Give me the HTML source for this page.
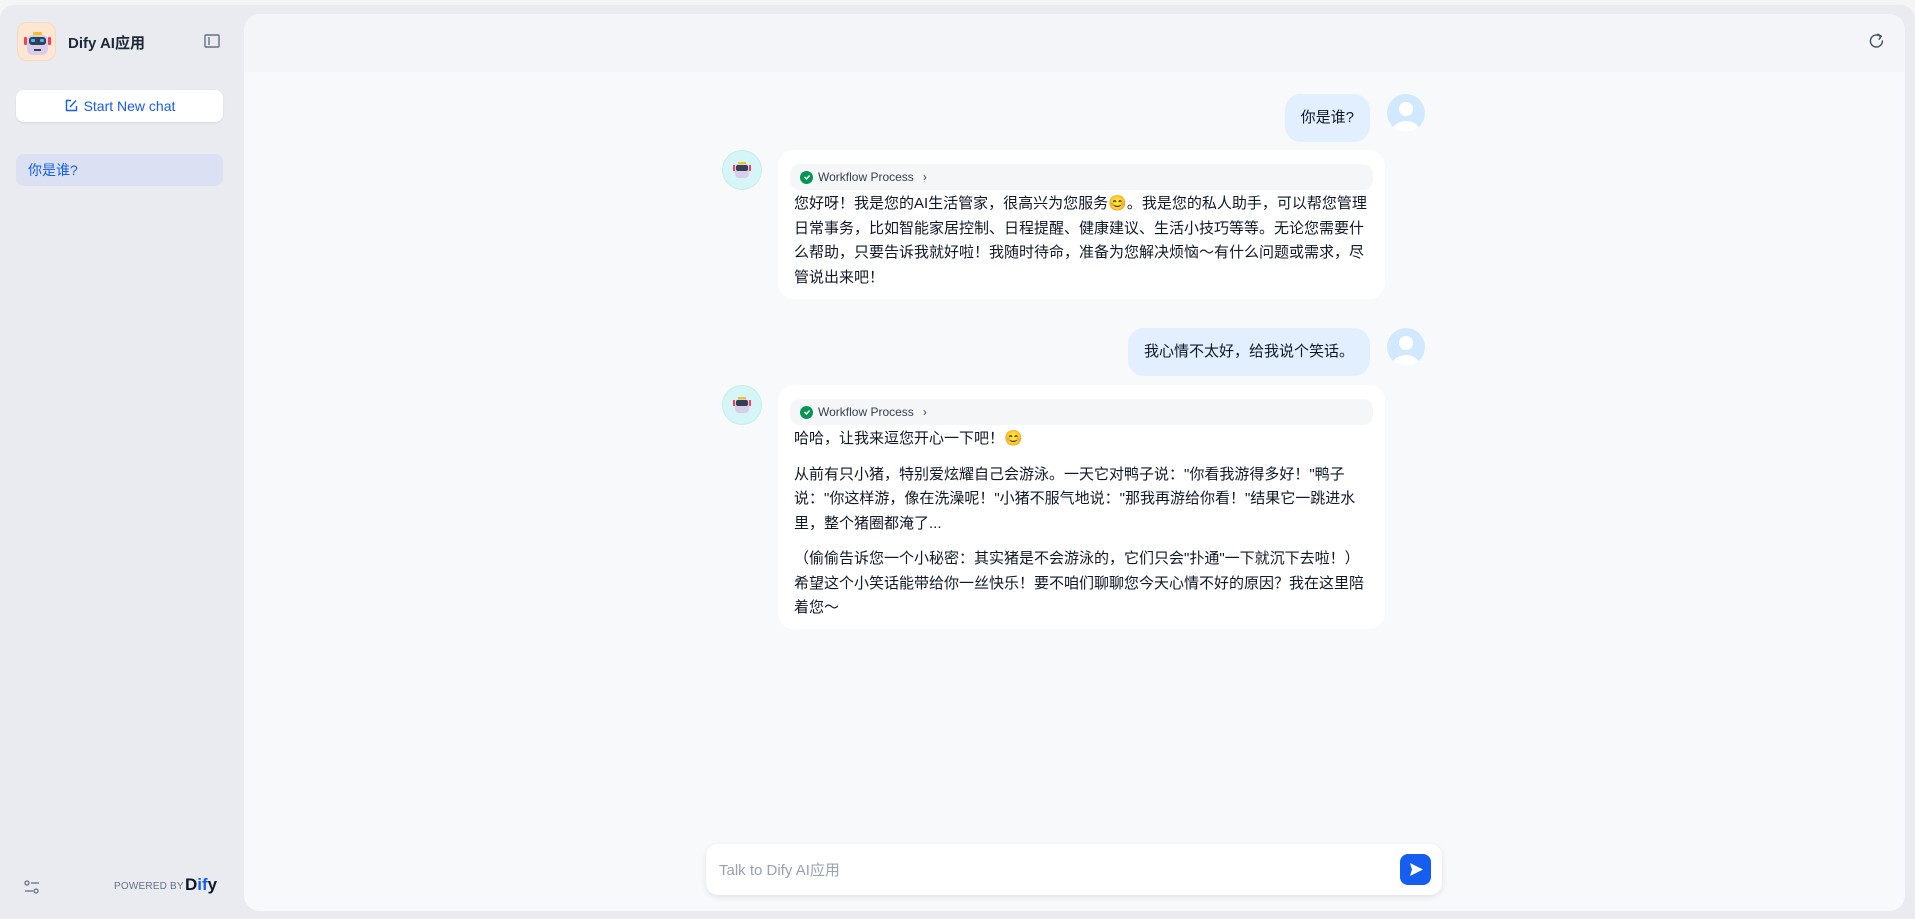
<!DOCTYPE html>
<html><head><meta charset="utf-8"><style>
*{box-sizing:border-box;margin:0;padding:0}
body{width:1915px;height:919px;overflow:hidden;background:#f5f5f5;font-family:"Liberation Sans","Noto Sans CJK SC",sans-serif;position:relative}
.wrap{position:absolute;left:0;top:5px;width:1915px;height:914px;background:#e9ebf0;border-radius:14px 14px 0 0}
.main{position:absolute;left:244px;top:14px;width:1661px;height:897px;background:#f8f9fb;border-radius:16px;overflow:hidden}
.hdr{position:absolute;left:0;top:0;width:100%;height:58px;background:#f4f5f8}
.abs{position:absolute}
.logo{left:17px;top:22px;width:39px;height:39px;border-radius:10px;background:#fde6d2;border:1px solid #f7d9bf}
.title{left:68px;top:32px;font-size:15px;font-weight:bold;color:#1d2939}
.btn{left:16px;top:90px;width:207px;height:32px;background:#fff;border-radius:8px;box-shadow:0 1px 2px rgba(16,24,40,.08);color:#155eef;font-size:14px;display:flex;align-items:center;justify-content:center;gap:6px}
.item{left:16px;top:154px;width:207px;height:32px;background:#dbe1f3;border-radius:8px;color:#155eef;font-size:14px;line-height:32px;padding-left:12px}
.ub{background:#e1effe;border-radius:16px;font-size:15px;color:#101828;line-height:24px;padding:12px 16px;white-space:nowrap}
.av{width:38px;height:38px;border-radius:50%;background:#d1e9ff;overflow:hidden}
.bav{width:40px;height:40px;border-radius:50%;background:#d5f5f6;border:1px solid #c4eef0}
.bb{background:#fff;border-radius:16px;padding:14px 16px 12px;font-size:15px;color:#101828;line-height:24.5px}
.wf{margin:0 -4px 2px -4px;height:26px;background:#f5f6f8;border-radius:10px;font-size:12px;color:#354052;display:flex;align-items:center;padding-left:10px;gap:5px;line-height:26px}
.chk{width:13px;height:13px;border-radius:50%;background:#079455;display:inline-flex;align-items:center;justify-content:center}
p{margin:0}
</style></head><body>
<div class="wrap">
</div>
<div class="abs logo" style="top:22px">
<svg width="39" height="39" viewBox="0 0 39 39"><rect x="9" y="12" width="21" height="20" rx="6" fill="#d9cdea"/><rect x="11" y="14" width="17" height="8" rx="3" fill="#334155"/><rect x="13" y="16" width="4" height="3" rx="1" fill="#38bdf8"/><rect x="22" y="16" width="4" height="3" rx="1" fill="#38bdf8"/><rect x="16" y="26" width="7" height="2" fill="#334155"/><rect x="15" y="9" width="9" height="3" rx="1" fill="#fbbf24"/><rect x="6" y="14" width="3" height="8" rx="1" fill="#f43f5e"/><rect x="30" y="14" width="3" height="8" rx="1" fill="#f43f5e"/></svg>
</div>
<div class="abs title">Dify AI应用</div>
<svg class="abs" style="left:204px;top:34px" width="16" height="14" viewBox="0 0 16 14"><rect x="1" y="1" width="14" height="12" rx="1" fill="none" stroke="#667085" stroke-width="1.4"/><line x1="5" y1="3" x2="5" y2="11" stroke="#667085" stroke-width="1.4"/></svg>
<div class="abs btn"><svg width="14" height="14" viewBox="0 0 14 14"><path d="M7 1.5H2.5v10h10V7" fill="none" stroke="#155eef" stroke-width="1.4"/><path d="M6 8l6-6.5" stroke="#155eef" stroke-width="1.4"/></svg>Start New chat</div>
<div class="abs item">你是谁?</div>
<svg class="abs" style="left:24px;top:880px" width="16" height="14" viewBox="0 0 16 14"><circle cx="3" cy="3" r="2" fill="none" stroke="#667085" stroke-width="1.3"/><line x1="7" y1="3" x2="15" y2="3" stroke="#667085" stroke-width="1.3"/><circle cx="12" cy="11" r="2" fill="none" stroke="#667085" stroke-width="1.3"/><line x1="1" y1="11" x2="9" y2="11" stroke="#667085" stroke-width="1.3"/></svg>
<div class="abs" style="left:114px;top:881px;font-size:10px;color:#667085;letter-spacing:.2px">POWERED BY</div>
<div class="abs" style="left:185px;top:875px;font-size:17px;font-weight:bold;color:#101828">D<span style="color:#155eef">if</span>y</div>

<div class="main">
<div class="hdr"></div>
<svg class="abs" style="left:1624px;top:19px" width="17" height="17" viewBox="0 0 17 17"><path d="M12 3.2A6 6 0 1 0 14.4 8" fill="none" stroke="#475467" stroke-width="1.5" stroke-linecap="round"/><path d="M10 1.2l3.2 2-2 3" fill="none" stroke="#475467" stroke-width="1.5" stroke-linecap="round"/></svg>

<div class="abs ub" style="right:535px;top:80px;height:48px">你是谁?</div>
<div class="abs av" style="left:1143px;top:80px"><svg width="38" height="38"><circle cx="19" cy="15" r="7" fill="#fff"/><ellipse cx="19" cy="38" rx="14" ry="11" fill="#fff"/></svg></div>

<div class="abs bav" style="left:478px;top:136px"><svg width="38" height="38" viewBox="0 0 38 38"><rect x="12" y="13" width="14" height="14" rx="4" fill="#d9cdea"/><rect x="13" y="14" width="12" height="6" rx="2" fill="#334155"/><rect x="15" y="11" width="8" height="2" fill="#fbbf24"/><rect x="10" y="14" width="2" height="6" fill="#f43f5e"/><rect x="26" y="14" width="2" height="6" fill="#f43f5e"/></svg></div>
<div class="abs bb" style="left:534px;top:136px;width:607px;height:149px">
<div class="wf"><span class="chk"><svg width="8" height="8"><path d="M1.5 4l2 2 3-3.5" fill="none" stroke="#fff" stroke-width="1.4"/></svg></span>Workflow Process <span style="margin-left:4px">›</span></div>
<p>您好呀！我是您的AI生活管家，很高兴为您服务😊。我是您的私人助手，可以帮您管理日常事务，比如智能家居控制、日程提醒、健康建议、生活小技巧等等。无论您需要什么帮助，只要告诉我就好啦！我随时待命，准备为您解决烦恼～有什么问题或需求，尽管说出来吧！</p>
</div>

<div class="abs ub" style="right:535px;top:314px;height:48px">我心情不太好，给我说个笑话。</div>
<div class="abs av" style="left:1143px;top:314px"><svg width="38" height="38"><circle cx="19" cy="15" r="7" fill="#fff"/><ellipse cx="19" cy="38" rx="14" ry="11" fill="#fff"/></svg></div>

<div class="abs bav" style="left:478px;top:371px"><svg width="38" height="38" viewBox="0 0 38 38"><rect x="12" y="13" width="14" height="14" rx="4" fill="#d9cdea"/><rect x="13" y="14" width="12" height="6" rx="2" fill="#334155"/><rect x="15" y="11" width="8" height="2" fill="#fbbf24"/><rect x="10" y="14" width="2" height="6" fill="#f43f5e"/><rect x="26" y="14" width="2" height="6" fill="#f43f5e"/></svg></div>
<div class="abs bb" style="left:534px;top:371px;width:607px;height:244px">
<div class="wf"><span class="chk"><svg width="8" height="8"><path d="M1.5 4l2 2 3-3.5" fill="none" stroke="#fff" stroke-width="1.4"/></svg></span>Workflow Process <span style="margin-left:4px">›</span></div>
<p>哈哈，让我来逗您开心一下吧！😊</p>
<p style="margin-top:11px">从前有只小猪，特别爱炫耀自己会游泳。一天它对鸭子说："你看我游得多好！"鸭子说："你这样游，像在洗澡呢！"小猪不服气地说："那我再游给你看！"结果它一跳进水里，整个猪圈都淹了...</p>
<p style="margin-top:11px">（偷偷告诉您一个小秘密：其实猪是不会游泳的，它们只会"扑通"一下就沉下去啦！）希望这个小笑话能带给你一丝快乐！要不咱们聊聊您今天心情不好的原因？我在这里陪着您～</p>
</div>

<div class="abs" style="left:462px;top:830px;width:736px;height:51px;background:#fff;border-radius:12px;box-shadow:0 2px 6px rgba(16,24,40,.1)">
<div class="abs" style="left:13px;top:15px;font-size:15px;color:#98a2b3">Talk to Dify AI应用</div>
<div class="abs" style="left:694px;top:10px;width:31px;height:31px;background:#155eef;border-radius:8px"><svg width="31" height="31" viewBox="0 0 31 31"><path d="M10 9l13 6.5L10 22l2-6.5z" fill="#fff"/></svg></div>
</div>
</div>
</body></html>
